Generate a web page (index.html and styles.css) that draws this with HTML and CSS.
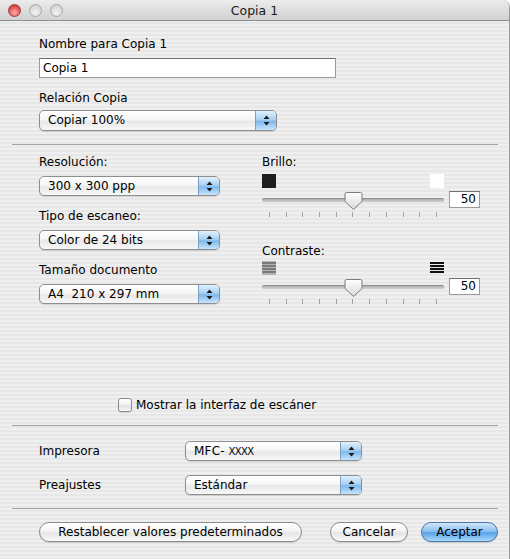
FILE: index.html
```html
<!DOCTYPE html>
<html lang="es">

<head>
  <meta charset="UTF-8">
  <title>Copia 1</title>
  <link rel="stylesheet" href="styles.css">
</head>

<body>
  <div class="window">
    <!-- barra de título -->
    <div class="titlebar">
      <div class="lights">
        <span class="light close"></span>
        <span class="light"></span>
        <span class="light"></span>
      </div>
      <div class="title">Copia 1</div>
      <div></div>
    </div>

    <!-- nombre y relación -->
    <section class="name-block">
      <div class="lbl">Nombre para Copia 1</div>
      <div class="field name-field">Copia 1</div>
      <div class="lbl gap">Relación Copia</div>
      <div class="popup popup-rel">
        <span class="popup-text">Copiar 100%</span>
        <span class="popup-arrows"><svg width="7" height="11" viewBox="0 0 7 11"><path d="M3.5 0.5 L6.5 4 H0.5 Z M3.5 10.5 L6.5 7 H0.5 Z" fill="#1a1a1a"/></svg></span>
      </div>
    </section>

    <hr class="sep sep-1">

    <!-- opciones de escaneo -->
    <section class="scan-block">
      <div class="col-left">
        <div class="lbl">Resolución:</div>
        <div class="popup popup-left">
          <span class="popup-text">300 x 300 ppp</span>
          <span class="popup-arrows"><svg width="7" height="11" viewBox="0 0 7 11"><path d="M3.5 0.5 L6.5 4 H0.5 Z M3.5 10.5 L6.5 7 H0.5 Z" fill="#1a1a1a"/></svg></span>
        </div>
        <div class="lbl gap">Tipo de escaneo:</div>
        <div class="popup popup-left">
          <span class="popup-text">Color de 24 bits</span>
          <span class="popup-arrows"><svg width="7" height="11" viewBox="0 0 7 11"><path d="M3.5 0.5 L6.5 4 H0.5 Z M3.5 10.5 L6.5 7 H0.5 Z" fill="#1a1a1a"/></svg></span>
        </div>
        <div class="lbl gap">Tamaño documento</div>
        <div class="popup popup-left">
          <span class="popup-text">A4&nbsp; 210 x 297 mm</span>
          <span class="popup-arrows"><svg width="7" height="11" viewBox="0 0 7 11"><path d="M3.5 0.5 L6.5 4 H0.5 Z M3.5 10.5 L6.5 7 H0.5 Z" fill="#1a1a1a"/></svg></span>
        </div>
      </div>

      <div class="col-right">
        <div class="lbl">Brillo:</div>
        <div class="icon-row">
          <span class="swatch black"></span>
          <span class="swatch white"></span>
        </div>
        <div class="slider-row">
          <div class="track">
            <svg class="thumb" width="19" height="19" viewBox="0 0 19 19">
              <defs>
                <linearGradient id="tg1" x1="0" y1="0" x2="0" y2="1">
                  <stop offset="0" stop-color="#ffffff"/>
                  <stop offset="1" stop-color="#d8d8d8"/>
                </linearGradient>
              </defs>
              <path d="M2.5 0.5 H16.5 A1.5 1.5 0 0 1 18 2 V9.5 L9.5 17.5 L1 9.5 V2 A1.5 1.5 0 0 1 2.5 0.5 Z" fill="url(#tg1)" stroke="#7c7c7c"/>
            </svg>
          </div>
          <div class="field num">50</div>
        </div>
        <div class="ticks">
          <i></i><i></i><i></i><i></i><i></i><i></i><i></i><i></i><i></i><i></i><i></i>
        </div>

        <div class="lbl contrast-lbl">Contraste:</div>
        <div class="icon-row">
          <svg width="14" height="14" viewBox="0 0 14 14">
            <rect x="0" y="0" width="14" height="14" fill="#b4b4b4"/>
            <rect x="0" y="1" width="14" height="2" fill="#7a7a7a"/>
            <rect x="0" y="4" width="14" height="2" fill="#7a7a7a"/>
            <rect x="0" y="7" width="14" height="2" fill="#7a7a7a"/>
            <rect x="0" y="10" width="14" height="2" fill="#7a7a7a"/>
          </svg>
          <svg width="14" height="14" viewBox="0 0 14 14">
            <rect x="0" y="1" width="14" height="2" fill="#111"/>
            <rect x="0" y="4" width="14" height="2" fill="#111"/>
            <rect x="0" y="7" width="14" height="2" fill="#111"/>
            <rect x="0" y="10" width="14" height="2" fill="#111"/>
          </svg>
        </div>
        <div class="slider-row">
          <div class="track">
            <svg class="thumb" width="19" height="19" viewBox="0 0 19 19">
              <defs>
                <linearGradient id="tg2" x1="0" y1="0" x2="0" y2="1">
                  <stop offset="0" stop-color="#ffffff"/>
                  <stop offset="1" stop-color="#d8d8d8"/>
                </linearGradient>
              </defs>
              <path d="M2.5 0.5 H16.5 A1.5 1.5 0 0 1 18 2 V9.5 L9.5 17.5 L1 9.5 V2 A1.5 1.5 0 0 1 2.5 0.5 Z" fill="url(#tg2)" stroke="#7c7c7c"/>
            </svg>
          </div>
          <div class="field num">50</div>
        </div>
        <div class="ticks">
          <i></i><i></i><i></i><i></i><i></i><i></i><i></i><i></i><i></i><i></i><i></i>
        </div>
      </div>
    </section>

    <!-- casilla -->
    <div class="check-row">
      <span class="checkbox"></span>
      <span>Mostrar la interfaz de escáner</span>
    </div>

    <hr class="sep sep-2">

    <!-- impresora -->
    <section class="print-block">
      <div class="print-lbl">Impresora</div>
      <div class="popup popup-print">
        <span class="popup-text"><span class="mfc">MFC-</span> <span class="xxxx">XXXX</span></span>
        <span class="popup-arrows"><svg width="7" height="11" viewBox="0 0 7 11"><path d="M3.5 0.5 L6.5 4 H0.5 Z M3.5 10.5 L6.5 7 H0.5 Z" fill="#1a1a1a"/></svg></span>
      </div>
      <div class="print-lbl">Preajustes</div>
      <div class="popup popup-print">
        <span class="popup-text">Estándar</span>
        <span class="popup-arrows"><svg width="7" height="11" viewBox="0 0 7 11"><path d="M3.5 0.5 L6.5 4 H0.5 Z M3.5 10.5 L6.5 7 H0.5 Z" fill="#1a1a1a"/></svg></span>
      </div>
    </section>

    <hr class="sep sep-3">

    <!-- botones -->
    <div class="buttons">
      <button class="btn btn-reset">Restablecer valores predeterminados</button>
      <button class="btn btn-cancel">Cancelar</button>
      <button class="btn btn-ok">Aceptar</button>
    </div>
  </div>
</body>

</html>
```

FILE: styles.css
```css
* {
  box-sizing: border-box;
}

body {
  margin: 0;
  background: #ffffff;
  font-family: "DejaVu Sans", "Liberation Sans", sans-serif;
  font-size: 12px;
  color: #000;
}

/* ventana */
.window {
  width: 510px;
  height: 559px;
  background: repeating-linear-gradient(to bottom, #efefef 0, #efefef 2px, #e7e7e7 2px, #e7e7e7 4px);
  border-right: 1px solid #9a9a9a;
  border-top-right-radius: 7px;
  overflow: hidden;
}

.titlebar {
  height: 21px;
  display: grid;
  grid-template-columns: 1fr auto 1fr;
  align-items: center;
  background: linear-gradient(#ececec, #dddddd 50%, #d2d2d2);
  border-bottom: 1px solid #8c8c8c;
}

.lights {
  display: flex;
  gap: 8px;
  padding-left: 8px;
}

.light {
  width: 13px;
  height: 13px;
  border-radius: 50%;
  border: 1px solid #a9a9a9;
  background: radial-gradient(circle at 50% 70%, #f4f4f4 0, #dcdcdc 55%, #c4c4c4 100%);
}

.light.close {
  border-color: #9c3b3b;
  background: radial-gradient(circle at 50% 70%, #ffb1a8 0, #e5595a 55%, #b53032 100%);
}

.title {
  font-size: 12.5px;
  color: #1a1a1a;
}

.lbl {
  line-height: 16px;
}

.lbl.gap {
  margin-top: 12px;
}

/* campos */
.field {
  height: 20px;
  background: #ffffff;
  border: 1px solid #9b9b9b;
  border-top-color: #707070;
  line-height: 18px;
}

.name-block {
  padding: 15px 0 0 39px;
}

.name-field {
  width: 297px;
  margin-top: 6px;
  padding-left: 3px;
}

.name-block .popup {
  margin-top: 4px;
}

.popup {
  display: flex;
  height: 20px;
  border: 1px solid #8e8e8e;
  border-radius: 5px;
  background: linear-gradient(#ffffff, #f6f6f6 45%, #e8e8e8 55%, #f7f7f7);
  box-shadow: 0 1px 1px rgba(0, 0, 0, 0.12);
  overflow: hidden;
}

.popup-rel {
  width: 238px;
  height: 21px;
}

.popup-left {
  width: 181px;
  margin-top: 6px;
}

.popup-print {
  width: 177px;
}

.popup-text {
  flex: 1;
  padding-left: 8px;
  line-height: 18px;
  white-space: nowrap;
}

.popup-arrows {
  width: 21px;
  display: flex;
  align-items: center;
  justify-content: center;
  border-left: 1px solid #7d9fc6;
  background: linear-gradient(#e2f1fd, #a9d1f3 45%, #7fb8ec 55%, #c7e5fc);
}

.mfc {
  letter-spacing: 0.2px;
}

.xxxx {
  font-size: 10px;
  letter-spacing: -0.6px;
}

/* separadores */
.sep {
  border: none;
  border-top: 1px solid #a3a3a3;
  margin: 0 11px 0 12px;
  height: 0;
}

.sep-1 {
  margin-top: 13px;
}

.sep-2 {
  margin-top: 13px;
}

.sep-3 {
  margin-top: 13px;
}

/* escaneo */
.scan-block {
  display: flex;
  padding: 9px 0 0 39px;
}

.col-left {
  width: 223px;
}

.col-right {
  width: 218px;
}

.icon-row {
  width: 182px;
  height: 14px;
  display: flex;
  justify-content: space-between;
  margin-top: 4px;
}

.swatch {
  width: 14px;
  height: 14px;
}

.swatch.black {
  background: #1e1e1e;
}

.swatch.white {
  background: #ffffff;
}

.slider-row {
  display: flex;
  align-items: center;
  gap: 5px;
  margin-top: 3px;
}

.track {
  position: relative;
  width: 182px;
  height: 4px;
  border-radius: 2px;
  background: linear-gradient(#a9a9a9, #cfcfcf);
  box-shadow: inset 0 1px 1px rgba(0, 0, 0, 0.2);
}

.thumb {
  position: absolute;
  left: 82px;
  top: -6px;
}

.num {
  width: 31px;
  height: 17px;
  line-height: 15px;
  text-align: right;
  padding-right: 3px;
}

.ticks {
  width: 182px;
  height: 5px;
  display: flex;
  justify-content: space-between;
  padding: 0 7px;
  margin-top: 4px;
}

.ticks i {
  width: 1px;
  height: 5px;
  background: #a0a0a0;
}

.contrast-lbl {
  margin-top: 26px;
}

.col-right .contrast-lbl + .icon-row {
  margin-top: 2px;
}

/* casilla */
.check-row {
  display: flex;
  align-items: center;
  gap: 4px;
  height: 14px;
  margin: 94px 0 0 118px;
  line-height: 14px;
}

.checkbox {
  width: 14px;
  height: 14px;
  border: 1px solid #8a8a8a;
  border-radius: 3px;
  background: linear-gradient(#ffffff, #f0f0f0 50%, #e2e2e2 55%, #f8f8f8);
  box-shadow: 0 1px 1px rgba(0, 0, 0, 0.1);
}

/* impresora */
.print-block {
  display: grid;
  grid-template-columns: 146px 177px;
  row-gap: 14px;
  align-items: center;
  padding: 15px 0 0 39px;
}

/* botones */
.buttons {
  display: flex;
  padding: 13px 11px 0 39px;
}

.btn {
  height: 20px;
  padding: 0;
  border: 1px solid #8a8a8a;
  border-radius: 10px;
  background: linear-gradient(#ffffff, #f4f4f4 45%, #e4e4e4 55%, #fafafa);
  box-shadow: 0 1px 1px rgba(0, 0, 0, 0.12);
  font-family: inherit;
  font-size: 12px;
  color: #000;
  line-height: 18px;
}

.btn-reset {
  width: 263px;
}

.btn-cancel {
  width: 78px;
  margin-left: auto;
}

.btn-ok {
  width: 77px;
  margin-left: 13px;
  border-color: #4b78a8;
  background: linear-gradient(#cfe6fb, #8cc1f0 45%, #5aa2e6 55%, #a9dafc);
}
```
